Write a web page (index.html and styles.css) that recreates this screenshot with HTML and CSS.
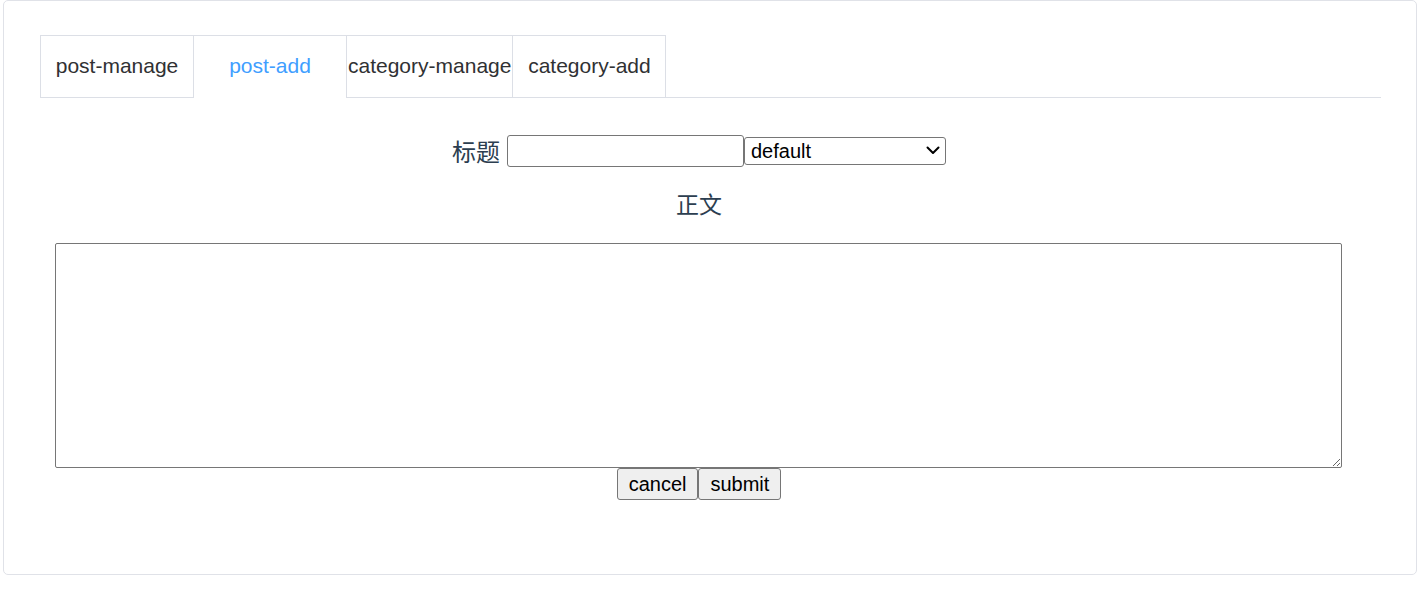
FILE: index.html
```html
<!DOCTYPE html>
<html lang="zh">
<head>
<meta charset="utf-8">
<title>post-add</title>
<link rel="stylesheet" href="styles.css">
</head>
<body>
<div class="card">
  <div class="tabs-header">
    <div class="tab">post-manage</div>
    <div class="tab active">post-add</div>
    <div class="tab wide">category-manage</div>
    <div class="tab">category-add</div>
  </div>
  <div class="panel">
    <div class="title-row">
      <label class="label" for="title">标题</label><input id="title" class="title-input" type="text"><span class="select-wrap"><select class="cat-select"><option>default</option></select><svg class="chev" width="14" height="9" viewBox="0 0 14 9" aria-hidden="true"><path d="M1.5 1.5 L7 7 L12.5 1.5" fill="none" stroke="#000" stroke-width="2" stroke-linecap="round" stroke-linejoin="round"/></svg></span>
    </div>
    <div class="label body-label">正文</div>
    <textarea class="body-text"></textarea>
    <div class="actions">
      <button class="btn" type="button">cancel</button><button class="btn" type="button">submit</button>
    </div>
  </div>
</div>
</body>
</html>
```

FILE: styles.css
```css
html, body {
  margin: 0;
  padding: 0;
  background: #ffffff;
}

body {
  font-family: "Liberation Sans", Arial, "Noto Sans CJK SC", sans-serif;
}

.card {
  margin-left: 3px;
  width: 1414px;
  height: 575px;
  box-sizing: border-box;
  border: 1px solid #e0e2e8;
  border-radius: 5px;
  padding: 34px 35px 0 36px;
  background: #fff;
}

.tabs-header {
  display: flex;
  border-bottom: 1px solid #dcdfe6;
  height: 62px;
}

.tab {
  min-width: 152px;
  height: 60px;
  box-sizing: content-box;
  border: 1px solid #dcdfe6;
  border-bottom: none;
  margin-right: -1px;
  padding-bottom: 1px;
  display: flex;
  align-items: center;
  justify-content: center;
  font-size: 21px;
  color: #303133;
  white-space: nowrap;
  background: #fff;
}

.tab.wide {
  padding-left: 1px;
  padding-right: 1px;
}

.tab.active {
  color: #409eff;
  height: 60px;
  padding-bottom: 2px;
  position: relative;
  z-index: 1;
}

.panel {
  margin-left: 15px;
  width: 1288px;
  display: flex;
  flex-direction: column;
  align-items: center;
  padding-top: 37px;
}

.title-row {
  display: flex;
  align-items: center;
  height: 32px;
}

.label {
  font-family: "Noto Sans CJK SC", "Liberation Sans", sans-serif;
  font-size: 23px;
  line-height: 32px;
  color: #2c3e50;
}

.title-row .label {
  margin-right: 7px;
  font-size: 24px;
}

.title-input {
  box-sizing: border-box;
  width: 237px;
  height: 32px;
  margin: 0;
  border: 1px solid #767676;
  border-radius: 3px;
  font-family: "Liberation Sans", Arial, sans-serif;
  font-size: 20px;
  padding: 1px 3px;
}

.select-wrap {
  position: relative;
  display: flex;
  align-items: center;
}

.cat-select {
  box-sizing: border-box;
  width: 202px;
  height: 28px;
  margin: 0;
  border: 1px solid #767676;
  border-radius: 3px;
  font-family: "Liberation Sans", Arial, sans-serif;
  font-size: 20px;
  color: #000;
  background: #fff;
  padding: 0 24px 0 6px;
  appearance: none;
  -webkit-appearance: none;
}

.chev {
  position: absolute;
  right: 6px;
  top: 9px;
  pointer-events: none;
}

.body-label {
  margin-top: 20px;
}

.body-text {
  display: block;
  align-self: flex-start;
  box-sizing: border-box;
  width: 1287px;
  height: 225px;
  margin: 24px 0 0 0;
  border: 1px solid #767676;
  border-radius: 2px;
  font-family: "Liberation Mono", monospace;
  font-size: 20px;
  resize: both;
}

.actions {
  display: flex;
  margin-top: 0;
}

.btn {
  box-sizing: border-box;
  height: 32px;
  margin: 0;
  padding: 1px 11px;
  border: 1px solid #767676;
  border-radius: 3px;
  background: #efefef;
  font-family: "Liberation Sans", Arial, sans-serif;
  font-size: 20px;
  color: #000;
}
```
